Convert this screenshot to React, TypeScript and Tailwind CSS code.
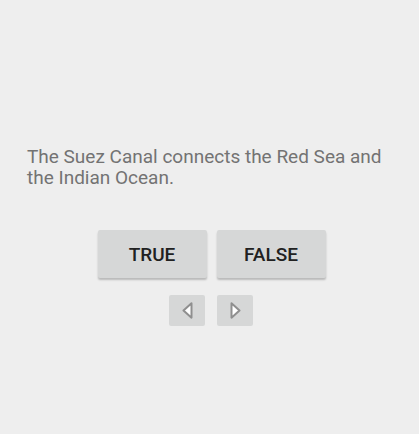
import React from "react";

const Arrow = ({ dir }: { dir: "left" | "right" }) => (
  <svg width="11" height="17" viewBox="0 0 11 17">
    <polygon
      points={dir === "left" ? "9.5,1.3 1.5,8.5 9.5,15.7" : "1.5,1.3 9.5,8.5 1.5,15.7"}
      fill="#ffffff"
      stroke="#8f8f8f"
      strokeWidth="2"
      strokeLinejoin="round"
    />
  </svg>
);

const App: React.FC = (): JSX.Element => {
  return (
    <div
      className="w-[419px] h-[434px] bg-[#eeeeee] flex flex-col"
      style={{ fontFamily: "Roboto, 'Liberation Sans', sans-serif" }}
    >
      <p className="mt-[146px] px-[27px] text-[19px] leading-[21px] text-[#737373]">
        The Suez Canal connects the Red Sea and the Indian Ocean.
      </p>
      <div className="mt-[42px] flex justify-center gap-[10px] pl-[4px]">
        <button className="w-[109px] h-[48px] pt-[3px] rounded-[2px] bg-[#d6d7d7] shadow-[0_2px_2px_rgba(0,0,0,0.22)] text-[19px] font-medium text-[#212121]">
          TRUE
        </button>
        <button className="w-[109px] h-[48px] pt-[3px] rounded-[2px] bg-[#d6d7d7] shadow-[0_2px_2px_rgba(0,0,0,0.22)] text-[19px] font-medium text-[#212121]">
          FALSE
        </button>
      </div>
      <div className="mt-[17px] flex justify-center gap-[12px] pl-[3px]">
        <button className="w-[36px] h-[31px] rounded-[2px] bg-[#d6d7d7] flex items-center justify-center">
          <Arrow dir="left" />
        </button>
        <button className="w-[36px] h-[31px] rounded-[2px] bg-[#d6d7d7] flex items-center justify-center">
          <Arrow dir="right" />
        </button>
      </div>
    </div>
  );
};

export default App;
